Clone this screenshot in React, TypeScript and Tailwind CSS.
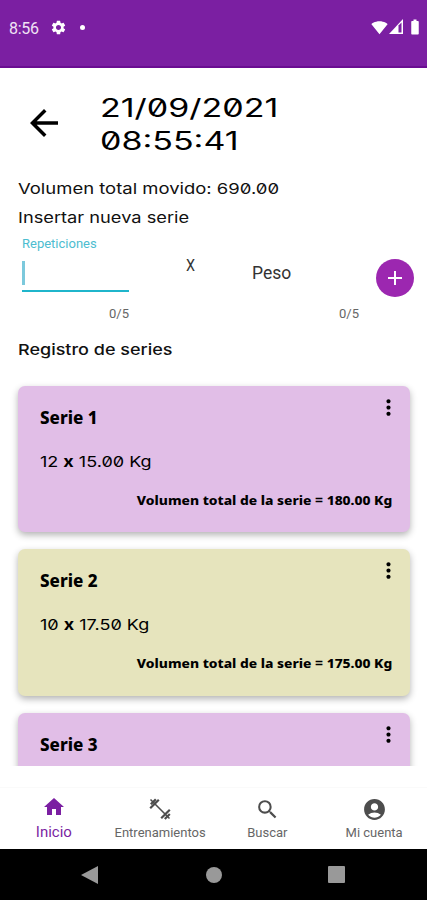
import React from 'react';
import { MdAccountCircle, MdAdd, MdArrowBack, MdBatteryFull, MdHome, MdMoreVert, MdSearch, MdSettings, MdSignalWifi4Bar } from 'react-icons/md';

interface Serie {
    id: number;
    reps?: string;
    peso?: string;
    total?: string;
    color: string;
}

const series: Serie[] = [
    { id: 1, reps: '12', peso: '15.00', total: '180.00', color: 'bg-[#e1bee7]' },
    { id: 2, reps: '10', peso: '17.50', total: '175.00', color: 'bg-[#e6e4bd]' },
    { id: 3, color: 'bg-[#e1bee7]' },
];

const StatusBar: React.FC = () => (
    <div className="h-[67.5px] shrink-0 bg-[#7b1fa2] border-b-2 border-[#6a0d92] text-white flex items-start pt-[19px] pl-[9px] pr-[3px]">
        <span className="font-[Roboto] text-base leading-[20px] tracking-[-0.3px] text-[#f0e2f5]">8:56</span>
        <MdSettings className="size-[17px] ml-[11px]" />
        <span className="size-[5px] rounded-full bg-white mt-[6px] ml-[13px]" />
        <MdSignalWifi4Bar className="size-[17px] ml-auto" />
        <svg viewBox="0 0 14 15" className="w-[14px] h-[15px] ml-px" fill="none">
            <path d="M14 0v15H0z" fill="#fff" />
            <path d="M9.500 6.500l3-3v10h-3z" fill="#7b1fa2" />
        </svg>
        <MdBatteryFull className="size-[18px] ml-[3px] -mt-px" />
    </div>
);

const SerieCard: React.FC<{ serie: Serie }> = ({ serie }) => (
    <div className={`${serie.color} h-[146.500px] shrink-0 rounded-[7px] shadow-[0_3px_7px_rgba(0,0,0,0.3)] text-black`}>
        <div className="flex justify-between h-[62px] pl-[22px] pr-[9px]">
            <h3 className="font-['Noto_Sans'] font-extrabold text-[17px] leading-6 pt-5">Serie {serie.id}</h3>
            <MdMoreVert className="size-[25px] mt-[9px]" />
        </div>
        {serie.total && (
            <>
                <p className="pl-[22px] text-[15px] leading-7 slashed-zero">
                    <span className="inline-block origin-left scale-x-[1.2] whitespace-pre">{serie.reps} <b>x</b> {serie.peso} Kg</span>
                </p>
                <p className="pr-[18px] pt-[13px] text-right font-['Noto_Sans'] font-extrabold text-[13px] leading-[22px]">
                    <span className="inline-block origin-right scale-x-[1.063] whitespace-nowrap">Volumen total de la serie = {serie.total} Kg</span>
                </p>
            </>
        )}
    </div>
);

const DumbbellIcon: React.FC = () => (
    <svg viewBox="0 0 22 22" className="size-[22px]" stroke="#4d4d4d" fill="none">
        <path d="M1.500 1.500l19 19" strokeWidth="1.6" />
        <path d="M1.800 6.200l5-5M1.200 10.300l8.600-8.600" strokeWidth="2.200" />
        <path d="M12.200 20.300l8.600-8.600M15.800 21l5-5" strokeWidth="2.200" />
    </svg>
);

const App: React.FC = () => {
    return (
        <div className="w-[427px] h-[900px] bg-white flex flex-col overflow-hidden font-[Inter,sans-serif] text-[#111]">
            <StatusBar />

            {/* Header */}
            <div className="flex items-center h-[106px] pl-[23px] pt-[5px]">
                <MdArrowBack className="size-[42px] text-black" />
                <h1 className="ml-[35px] pt-[3px] text-[25px] leading-[33px] slashed-zero text-black">
                    <span className="inline-block origin-left scale-x-[1.36]">21/09/2021<br />08:55:41</span>
                </h1>
            </div>

            <div className="px-[18px] h-[55px] text-[15px] leading-[29px] slashed-zero">
                <p><span className="inline-block origin-left scale-x-[1.23]">Volumen total movido: 690.00</span></p>
                <p><span className="inline-block origin-left scale-x-[1.215]">Insertar nueva serie</span></p>
            </div>

            {/* New serie form */}
            <div className="flex h-[105px] pl-[22px] pt-[5px] pr-[13px] font-[Roboto]">
                <div className="w-[107px]">
                    <label className="block text-[13px] leading-[20px] text-[#4dbdd0]">Repeticiones</label>
                    <div className="h-[38px] border-b-2 border-[#1fb5cb] pt-[7px]">
                        <div className="w-[3px] h-6 bg-[#7cc9dc]" />
                    </div>
                    <p className="text-right text-[13px] leading-[18px] pt-[13px] text-[#666]">0/5</p>
                </div>
                <span className="w-[14px] ml-[57px] mt-[22px] text-base leading-5 text-[#333] scale-x-[0.9] origin-left">X</span>
                <div className="w-[107px] ml-[52px]">
                    <p className="text-[17.500px] leading-5 pt-[29px] h-[71px] text-[#333]">Peso</p>
                    <p className="text-right text-[13px] leading-[18px] text-[#666]">0/5</p>
                </div>
                <button className="size-[38px] mt-[25px] ml-auto rounded-full bg-[#9c27b0] text-white flex items-center justify-center">
                    <MdAdd className="size-6" />
                </button>
            </div>

            <h2 className="px-[18px] h-[39px] pt-px text-[15px] leading-[29px] font-medium">
                <span className="inline-block origin-left scale-x-[1.2]">Registro de series</span>
            </h2>

            <div className="flex flex-col gap-[17px] h-[393.500px] shrink-0 overflow-hidden pt-[13px] pl-[18px] pr-[17px]">
                {series.map(serie => (
                    <SerieCard key={serie.id} serie={serie} />
                ))}
            </div>

            {/* Bottom navigation */}
            <nav className="mt-auto h-[62px] shrink-0 border-t border-[#fafafa] grid grid-cols-4 font-[Roboto] text-[13px] leading-4 text-[#666]">
                <div className="flex flex-col items-center pt-[7px] pl-px text-[#7b1fa2]">
                    <MdHome className="size-6" />
                    <span className="text-[15px] pt-[5px]">Inicio</span>
                </div>
                <div className="flex flex-col items-center pt-[10px]">
                    <DumbbellIcon />
                    <span className="pt-[5px]">Entrenamientos</span>
                </div>
                <div className="flex flex-col items-center pt-[9px] pl-px">
                    <MdSearch className="size-[25px] text-[#4d4d4d]" />
                    <span className="pt-[3px]">Buscar</span>
                </div>
                <div className="flex flex-col items-center pt-[9px] pl-px">
                    <MdAccountCircle className="size-[25px] text-[#4d4d4d]" />
                    <span className="pt-[3px]">Mi cuenta</span>
                </div>
            </nav>

            {/* Android buttons */}
            <div className="h-[51px] shrink-0 bg-black flex items-center text-[#999]">
                <svg viewBox="0 0 17 18" className="w-[17px] h-[18px] ml-[81px]" fill="currentColor">
                    <path d="M17 0v18L0 9z" />
                </svg>
                <span className="size-4 rounded-full bg-[#999] ml-[108px]" />
                <span className="size-[17px] rounded-[1px] bg-[#999] ml-[106px]" />
            </div>
        </div>
    );
};

export default App;
